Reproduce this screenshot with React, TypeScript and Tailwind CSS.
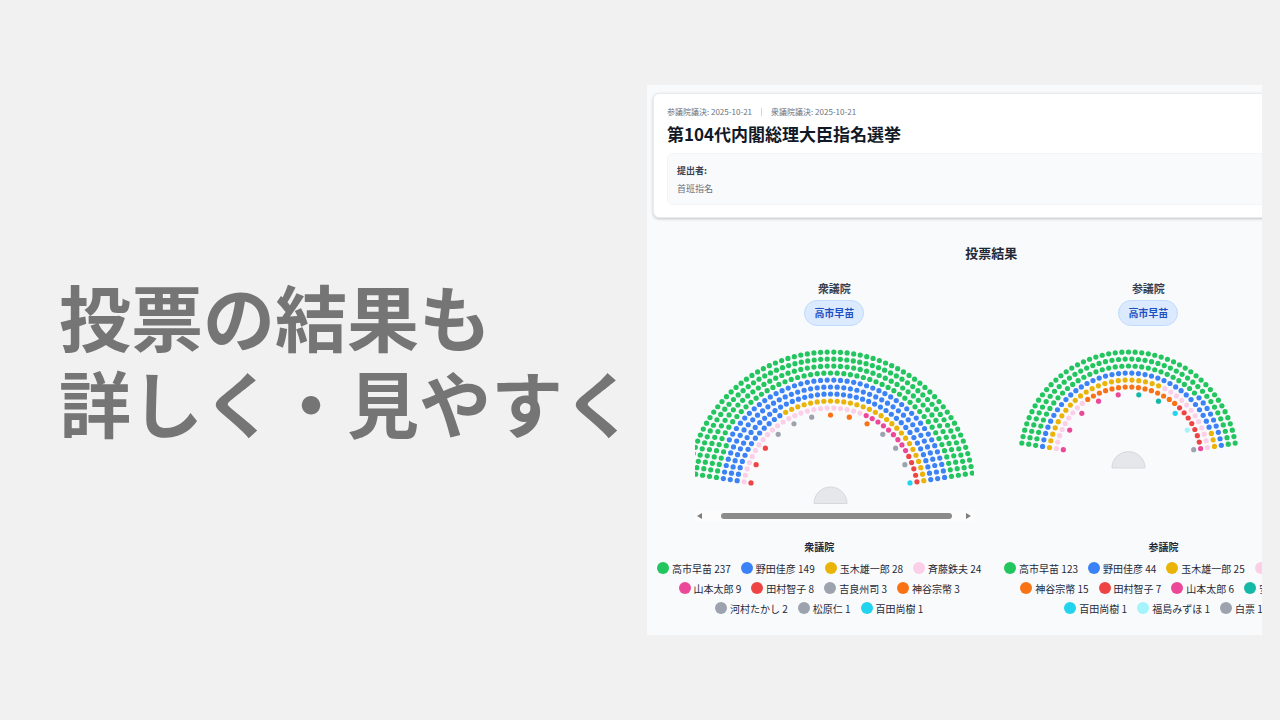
import clsx from "clsx";

type Vote = {
  name: string;
  count: number;
  fill: string;
};

type Chamber = {
  name: string;
  winner: string;
  rows: number[]; // seats per row, outermost first
  cx: number;
  cy: number;
  height: number;
  scrollable?: boolean;
  votes: Vote[];
};

const ROW_GAP = 7;
const SEAT_RADIUS = 2.6;
const START_ANGLE = 9;
const ARC = 162;

const chambers: Chamber[] = [
  {
    name: "衆議院",
    winner: "高市早苗",
    rows: [62, 60, 56, 53, 50, 47, 45, 41, 38, 13],
    cx: 135.5,
    cy: 150.5,
    height: 166,
    scrollable: true,
    votes: [
      { name: "高市早苗", count: 237, fill: "fill-[#22c55e]" },
      { name: "野田佳彦", count: 149, fill: "fill-[#3b82f6]" },
      { name: "玉木雄一郎", count: 28, fill: "fill-[#eab308]" },
      { name: "斉藤鉄夫", count: 24, fill: "fill-[#fbcfe8]" },
      { name: "山本太郎", count: 9, fill: "fill-[#ec4899]" },
      { name: "田村智子", count: 8, fill: "fill-[#ef4444]" },
      { name: "吉良州司", count: 3, fill: "fill-[#9ca3af]" },
      { name: "神谷宗幣", count: 3, fill: "fill-[#f97316]" },
      { name: "河村たかし", count: 2, fill: "fill-[#9ca3af]" },
      { name: "松原仁", count: 1, fill: "fill-[#9ca3af]" },
      { name: "百田尚樹", count: 1, fill: "fill-[#22d3ee]" },
    ],
  },
  {
    name: "参議院",
    winner: "高市早苗",
    rows: [47, 44, 41, 38, 34, 32, 10],
    cx: 119.5,
    cy: 115,
    height: 128,
    votes: [
      { name: "高市早苗", count: 123, fill: "fill-[#22c55e]" },
      { name: "野田佳彦", count: 44, fill: "fill-[#3b82f6]" },
      { name: "玉木雄一郎", count: 25, fill: "fill-[#eab308]" },
      { name: "斉藤鉄夫", count: 21, fill: "fill-[#fbcfe8]" },
      { name: "神谷宗幣", count: 15, fill: "fill-[#f97316]" },
      { name: "田村智子", count: 7, fill: "fill-[#ef4444]" },
      { name: "山本太郎", count: 6, fill: "fill-[#ec4899]" },
      { name: "安野貴博", count: 2, fill: "fill-[#14b8a6]" },
      { name: "百田尚樹", count: 1, fill: "fill-[#22d3ee]" },
      { name: "福島みずほ", count: 1, fill: "fill-[#a5f3fc]" },
      { name: "白票", count: 1, fill: "fill-[#9ca3af]" },
    ],
  },
];

// Seats are filled left to right, row by row, from the outside in.
function getSeats({ rows, cx, cy, votes }: Chamber) {
  const fills = votes.flatMap((v) => Array<string>(v.count).fill(v.fill));
  const outer = cy - 7;
  let index = 0;
  return rows.flatMap((n, row) => {
    const r = outer - row * ROW_GAP;
    return Array.from({ length: n }, (_, i) => {
      const angle = ((START_ANGLE + (ARC * i) / (n - 1)) * Math.PI) / 180;
      return {
        x: cx - r * Math.cos(angle),
        y: cy - r * Math.sin(angle),
        fill: fills[index++],
      };
    });
  });
}

function SeatChart({ chamber }: { chamber: Chamber }) {
  const { cx, cy, height } = chamber;
  const base = cy + 8;
  return (
    <svg
      className="block w-full"
      style={{ height }}
      role="img"
      aria-label={chamber.name}
    >
      {getSeats(chamber).map((seat, i) => (
        <circle
          key={i}
          cx={seat.x}
          cy={seat.y}
          r={SEAT_RADIUS}
          className={seat.fill}
        />
      ))}
      <path
        d={`M${cx - 16.5} ${base}a16.5 16.5 0 0 1 33 0z`}
        className="fill-[#e5e7eb] stroke-[#d5d8dc]"
      />
    </svg>
  );
}

function ScrollBar() {
  return (
    <div className="flex h-2.5 items-center bg-[#fcfcfc] pr-[3px] pl-0.5">
      <svg viewBox="0 0 5 6" className="h-1.5 w-[5px] fill-[#7f7f7f]">
        <path d="M5 0v6L0 3z" />
      </svg>
      <div className="ml-[19px] h-1.5 w-[231px] rounded-full bg-[#8b8b8b]" />
      <svg viewBox="0 0 5 6" className="ml-auto h-1.5 w-[5px] fill-[#7f7f7f]">
        <path d="M0 0v6l5-3z" />
      </svg>
    </div>
  );
}

function ChamberResult({ chamber }: { chamber: Chamber }) {
  return (
    <div className="w-[279px]">
      <div className="flex flex-col items-center">
        <h3 className="text-[11px] leading-4 font-semibold text-[#374151]">
          {chamber.name}
        </h3>
        <span className="mt-1 rounded-full border border-[#bfdbfe] bg-[#dbeafe] px-[9px] text-[10px] leading-6 font-bold text-[#1e4fc0]">
          {chamber.winner}
        </span>
      </div>
      <div className="mt-[19px]">
        <SeatChart chamber={chamber} />
        {chamber.scrollable && <ScrollBar />}
      </div>
    </div>
  );
}

function Legend({ chamber }: { chamber: Chamber }) {
  return (
    <div className="flex-1">
      <h4 className="text-center text-[10px] leading-4 font-bold text-[#1f2937]">
        {chamber.name}
      </h4>
      <ul className="mt-[3px] flex flex-wrap justify-center gap-x-2.5">
        {chamber.votes.map((vote) => (
          <li
            key={vote.name}
            className="flex h-5 items-center gap-[3px] text-[10px] text-[#1f2937]"
          >
            <svg viewBox="0 0 12 12" className={clsx("size-3", vote.fill)}>
              <circle cx="6" cy="6" r="6" />
            </svg>
            <span className="whitespace-nowrap">
              {vote.name} {vote.count}
            </span>
          </li>
        ))}
      </ul>
    </div>
  );
}

function BillCard() {
  return (
    <section className="rounded-md border border-[#e9ebee] bg-white px-[13px] py-3 shadow-[0_1px_3px_rgba(0,0,0,0.22)]">
      <div className="flex items-center text-[8px] leading-3 text-[#6b7280]">
        <span>参議院議決: 2025-10-21</span>
        <span className="mx-[9px] h-2 w-px bg-[#d1d5db]" />
        <span>衆議院議決: 2025-10-21</span>
      </div>
      <h1 className="mt-1 text-[17px] leading-6 font-bold text-[#111827]">
        第104代内閣総理大臣指名選挙
      </h1>
      <dl className="mt-[7px] rounded-md border border-[#f3f4f6] bg-[#f9fafc] px-[9px] pt-2 pb-1.5 text-[9px] leading-[18px]">
        <dt className="font-bold text-[#374151]">提出者:</dt>
        <dd className="text-[#6b7280]">首班指名</dd>
      </dl>
    </section>
  );
}

function ResultPanel() {
  return (
    <div className="w-[51%] shrink-0 overflow-hidden bg-[#f9fafc]">
      <div className="w-[112%] px-1.5 pt-2 pb-[17px]">
        <BillCard />
        <h2 className="mt-[25px] text-center text-[13px] leading-5 font-bold text-[#1f2937]">
          投票結果
        </h2>
        <div className="mt-[17px] flex justify-center gap-[35px]">
          {chambers.map((chamber) => (
            <ChamberResult key={chamber.name} chamber={chamber} />
          ))}
        </div>
        <div className="mt-[18px] flex gap-3">
          {chambers.map((chamber) => (
            <Legend key={chamber.name} chamber={chamber} />
          ))}
        </div>
      </div>
    </div>
  );
}

export default function App() {
  return (
    <main
      lang="ja"
      className="flex min-h-screen items-center justify-between overflow-hidden bg-[#f1f1f1] pr-[18px] pl-14 font-['Noto_Sans_CJK_JP',sans-serif]"
    >
      <p className="w-0 pb-1 pl-[3px] text-[72px] leading-[86px] font-bold whitespace-nowrap text-[#757575]">
        投票の結果も
        <br />
        詳しく・見やすく
      </p>
      <ResultPanel />
    </main>
  );
}
